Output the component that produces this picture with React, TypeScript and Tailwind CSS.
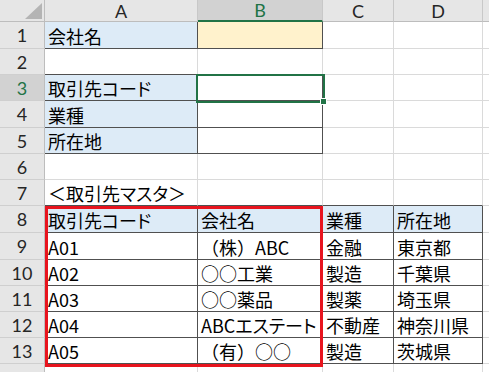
import { Fragment, ReactNode } from 'react';
import { twJoin } from 'tailwind-merge';

type Cell = { text?: ReactNode; fill?: 'blue' | 'yellow'; box?: boolean };

// katakana runs are set with proportional widths, like the sheet font does
const kana = (s: string) => (
  <span className="[font-feature-settings:'palt']">{s}</span>
);

const COLS = ['A', 'B', 'C', 'D', ''];
const ROW_COUNT = 14;
// the last row is only a sliver at the bottom edge, its number is not shown
const LABELED_ROWS = 13;

const blank = (): Cell => ({});

const sheet: Cell[][] = [
  [
    { text: '会社名', fill: 'blue', box: true },
    { fill: 'yellow', box: true },
    blank(),
    blank(),
    blank(),
  ],
  [blank(), blank(), blank(), blank(), blank()],
  [
    { text: <>取引先{kana('コード')}</>, fill: 'blue', box: true },
    { box: true },
    blank(),
    blank(),
    blank(),
  ],
  [{ text: '業種', fill: 'blue', box: true }, { box: true }, blank(), blank(), blank()],
  [{ text: '所在地', fill: 'blue', box: true }, { box: true }, blank(), blank(), blank()],
  [blank(), blank(), blank(), blank(), blank()],
  [{ text: <>＜取引先{kana('マスタ')}＞</> }, blank(), blank(), blank(), blank()],
  [
    { text: <>取引先{kana('コード')}</>, fill: 'blue', box: true },
    { text: '会社名', fill: 'blue', box: true },
    { text: '業種', fill: 'blue', box: true },
    { text: '所在地', fill: 'blue', box: true },
    blank(),
  ],
  [
    { text: 'A01', box: true },
    { text: '（株）ABC', box: true },
    { text: '金融', box: true },
    { text: '東京都', box: true },
    blank(),
  ],
  [
    { text: 'A02', box: true },
    { text: '○○工業', box: true },
    { text: '製造', box: true },
    { text: '千葉県', box: true },
    blank(),
  ],
  [
    { text: 'A03', box: true },
    { text: '○○薬品', box: true },
    { text: '製薬', box: true },
    { text: '埼玉県', box: true },
    blank(),
  ],
  [
    { text: 'A04', box: true },
    { text: <>ABC{kana('エステート')}</>, box: true },
    { text: '不動産', box: true },
    { text: '神奈川県', box: true },
    blank(),
  ],
  [
    { text: 'A05', box: true },
    { text: '（有）○○', box: true },
    { text: '製造', box: true },
    { text: '茨城県', box: true },
    blank(),
  ],
  [blank(), blank(), blank(), blank(), blank()],
];

const isBox = (r: number, c: number) => !!sheet[r]?.[c]?.box;

const ACTIVE_COL = 1;
const ACTIVE_ROW = 2;

export default function App() {
  return (
    <div className="relative w-[489px] h-[372px] overflow-hidden bg-white font-['Noto_Sans_CJK_JP','Noto_Sans',sans-serif] text-[18px] text-black">
      <div className="grid grid-cols-[45px_153px_125px_71px_89px_40px] grid-rows-[22px_27px_26px_26px_27px_26px_26px_26px_27px_27px_26px_26px_26px_26px_26px]">
        {/* corner */}
        <div className="relative bg-[#e6e6e6] border-r border-b border-[#bdbdbd]">
          <svg className="absolute left-0 top-0" width="45" height="22">
            <polygon points="25,19 42,3 42,19" fill="#b4b4b4" />
          </svg>
        </div>

        {/* column headers */}
        {COLS.map((col, c) => (
          <div
            key={'h' + c}
            className={twJoin(
              "flex items-center justify-center font-['Lato',sans-serif] text-[18px] leading-none border-r border-[#c8c8c8]",
              c === ACTIVE_COL
                ? 'bg-[#d2d2d2] text-[#217346] border-b-2 border-b-[#217346]'
                : 'bg-[#e6e6e6] text-[#262626] border-b border-b-[#bdbdbd]'
            )}
          >
            {col}
          </div>
        ))}

        {Array.from({ length: ROW_COUNT }, (_, r) => (
          <Fragment key={'r' + r}>
            <div
              className={twJoin(
                "flex items-center justify-center font-['Lato',sans-serif] text-[18px] leading-none border-b border-b-[#cfcfcf] border-r border-r-[#bdbdbd]",
                r === ACTIVE_ROW ? 'bg-[#d2d2d2] text-[#217346]' : 'bg-[#e6e6e6] text-[#262626]'
              )}
            >
              {r < LABELED_ROWS ? r + 1 : null}
            </div>
            {sheet[r].map((cell, c) => (
              <div
                key={c}
                className={twJoin(
                  'flex items-center pl-[3px] pt-[1px] whitespace-nowrap leading-none border-r border-b',
                  isBox(r, c) || isBox(r, c + 1) ? 'border-r-[#505050]' : 'border-r-[#dadada]',
                  isBox(r, c) || isBox(r + 1, c) ? 'border-b-[#505050]' : 'border-b-[#dadada]',
                  cell.fill === 'blue' && 'bg-[#ddebf7]',
                  cell.fill === 'yellow' && 'bg-[#fff2cc]'
                )}
              >
                {cell.text}
              </div>
            ))}
          </Fragment>
        ))}
      </div>

      {/* active cell B3 with fill handle */}
      <div className="absolute left-[196px] top-[74px] w-[129px] h-[29px] border-2 border-[#217346]" />
      <div className="absolute left-[320px] top-[98px] w-[7px] h-[7px] bg-[#217346] border border-white" />

      {/* red frame around A8:B13 */}
      <div className="absolute left-[45px] top-[206px] w-[278px] h-[161px] border-[3px] border-[#e8141e]" />
    </div>
  );
}
